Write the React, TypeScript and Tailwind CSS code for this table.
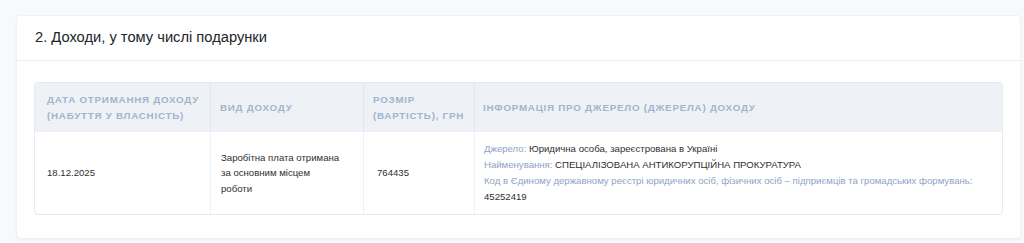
import React from "react";

const headers = [
  { label: "Дата отримання доходу (набуття у власність)", w: "w-[176px]", pl: "pl-[12px] pr-[8px]" },
  { label: "Вид доходу", w: "w-[153px]", pl: "pl-[9px] pr-[8px]" },
  { label: "Розмір (вартість), грн", w: "w-[111px]", pl: "pl-[9px] pr-[6px]" },
  { label: "Інформація про джерело (джерела) доходу", w: "", pl: "pl-[8px] pr-[10px]" },
];

const App: React.FC = () => {
  return (
    <div className="min-h-[243px] bg-[#f8f9fa] pt-[15px] px-[16px] pb-[5px] font-['Liberation_Sans',Arial,sans-serif]">
      <section className="w-[1005px] bg-white rounded-[4px] border border-[#f0f1f3] shadow-[0_1px_3px_rgba(0,0,0,0.04)]">
        {/* Title */}
        <div className="h-[45px] flex items-center px-[18px] pb-[2px] border-b border-[#eceef1]">
          <h2 className="text-[14.7px] text-[#212529] leading-none">
            2. Доходи, у тому числі подарунки
          </h2>
        </div>

        {/* Table */}
        <div className="pt-[21px] px-[17px] pb-[23px]">
          <div className="border border-[#e6ebf2] rounded-[4px] overflow-hidden">
            <div className="flex bg-[#eef2f7] h-[49px]">
              {headers.map((h, i) => (
                <div
                  key={i}
                  className={`${h.w} ${h.pl} ${i < 3 ? "flex-none border-r border-[#e3e8ef]" : "flex-1"} flex items-center text-[9.8px] leading-[15.5px] font-bold uppercase tracking-[0.75px] text-[#a3b3cf]`}
                >
                  <span>{h.label}</span>
                </div>
              ))}
            </div>
            <div className="flex h-[82px] text-[9.6px] text-[#2f2f2f]">
              <div className="w-[176px] flex-none border-r border-[#eef1f5] flex items-center pl-[12px]">
                18.12.2025
              </div>
              <div className="w-[153px] flex-none border-r border-[#eef1f5] flex items-center pl-[10px] leading-[15.5px]">
                <span className="w-[120px]">Заробітна плата отримана за основним місцем роботи</span>
              </div>
              <div className="w-[111px] flex-none border-r border-[#eef1f5] flex items-center pl-[13px]">
                764435
              </div>
              <div className="flex-1 flex flex-col justify-center pl-[9px] leading-[16px]">
                <div>
                  <span className="text-[#8fa3c6]">Джерело: </span>
                  Юридична особа, зареєстрована в Україні
                </div>
                <div>
                  <span className="text-[#8fa3c6]">Найменування: </span>
                  СПЕЦІАЛІЗОВАНА АНТИКОРУПЦІЙНА ПРОКУРАТУРА
                </div>
                <div className="text-[#8fa3c6]">
                  Код в Єдиному державному реєстрі юридичних осіб, фізичних осіб – підприємців та громадських формувань:
                </div>
                <div>45252419</div>
              </div>
            </div>
          </div>
        </div>
      </section>
    </div>
  );
};

export default App;
